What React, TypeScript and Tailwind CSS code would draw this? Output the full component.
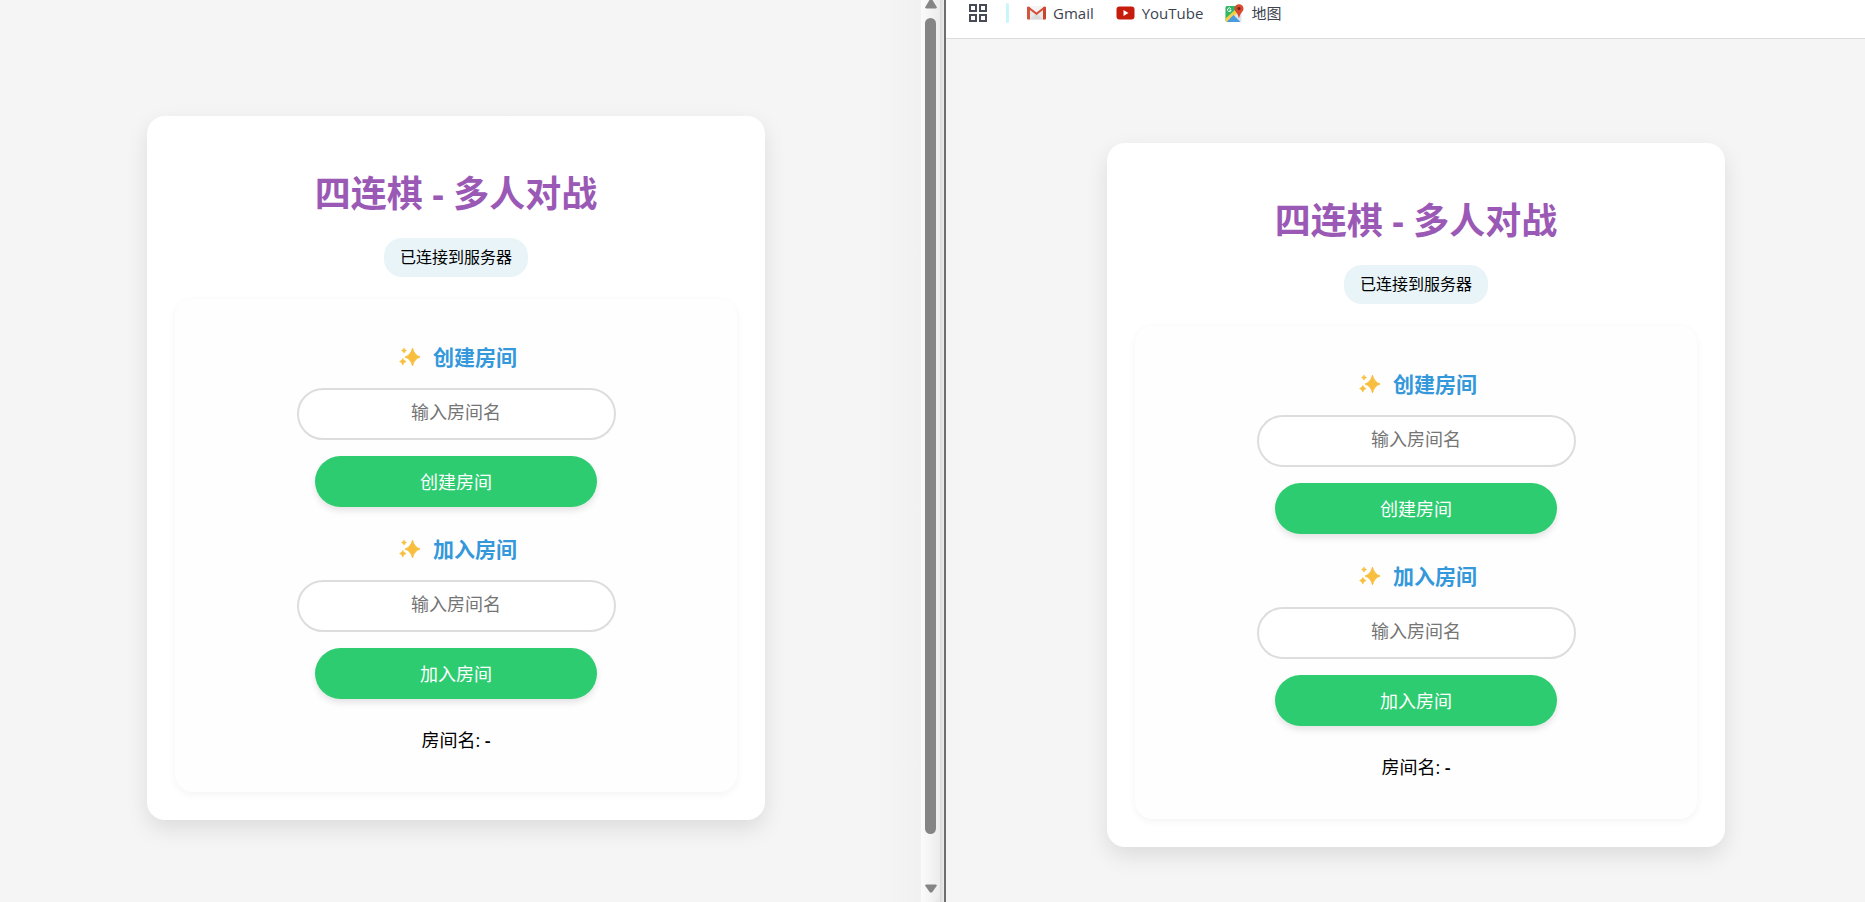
import React, { useState } from 'react';

const GridIcon: React.FC = () => (
  <svg width="18" height="18" viewBox="0 0 18 18" fill="none" stroke="#474b55" strokeWidth="2">
    <rect x="1" y="1" width="6" height="6" />
    <rect x="11" y="1" width="6" height="6" />
    <rect x="1" y="11" width="6" height="6" />
    <rect x="11" y="11" width="6" height="6" />
  </svg>
);

const GmailIcon: React.FC = () => (
  <svg width="19" height="14" viewBox="0 0 19 14">
    <rect x="1" y="0.5" width="17" height="13" rx="1" fill="#e8e8e8" />
    <path d="M3 13.5 9.5 7l6.5 6.5z" fill="#dadada" />
    <path d="M3 1h13L9.500 6z" fill="#f4f4f4" />
    <path d="M0 1.800Q0 .5 1.400.5L3 1.500V13.500H1Q0 13.500 0 12.500z" fill="#d2553f" />
    <path d="M19 1.800Q19 .5 17.600.5L16 1.500V13.500H18Q19 13.500 19 12.500z" fill="#c8442f" />
    <path d="M1.300 1.500 9.500 7.800 17.700 1.500" fill="none" stroke="#d54c38" strokeWidth="2" />
  </svg>
);

const YouTubeIcon: React.FC = () => (
  <svg width="19" height="14" viewBox="0 0 19 14">
    <rect x="0.500" y="0.500" width="18" height="13" rx="3" fill="#c51c0c" />
    <path d="M7.500 4v6l5-3z" fill="#fff" />
  </svg>
);

const MapsIcon: React.FC = () => (
  <svg width="19" height="19" viewBox="0 0 19 19">
    <rect x="0.500" y="2" width="16" height="16" rx="2" fill="#dfe3e6" />
    <path d="M2 2h10v4.500L1 17 .5 16V3.500Q.5 2 2 2z" fill="#2fb765" />
    <path d="M.5 14.500 11 5l2.500 2.500L3 18H2Q.5 18 .5 16.500z" fill="#f6cf45" />
    <path d="M1.500 18 8.500 11l7 7z" fill="#4a9be0" />
    <path d="M5.800 4.700A1.800 1.800 0 1 0 6.100 6H4.500" fill="none" stroke="#fff" strokeWidth="1" />
    <path d="M14 0.300a4.500 4.500 0 0 1 4.500 4.500c0 3-3.500 4-4.200 9h-.6c-.7-5-4.200-6-4.200-9A4.500 4.500 0 0 1 14 .3z" fill="#d8492f" />
    <circle cx="14" cy="4.500" r="1.500" fill="#7d1f14" />
  </svg>
);

const SparklesIcon: React.FC = () => (
  <svg width="22" height="20" viewBox="0 0 22 20" fill="#f8bf3f" stroke="#f8bf3f" strokeLinejoin="round">
    <path strokeWidth="1" d="M13.500 1.200Q15 8 21 10Q15 12 13.500 18.800Q12 12 6 10Q12 8 13.500 1.200z" />
    <path strokeWidth="0.500" d="M5 .9Q5.600 3 7.600 3.500Q5.600 4.100 5 6.200Q4.400 4.100 2.400 3.500Q4.400 3 5 .9z" />
    <path strokeWidth="0.500" d="M3.800 11.300Q4.600 13.900 7.100 14.600Q4.600 15.400 3.800 18.200Q3 15.400.5 14.600Q3 13.900 3.800 11.300z" />
  </svg>
);

interface RoomFormProps {
  id: string;
  title: string;
}

const RoomForm: React.FC<RoomFormProps> = ({ id, title }) => {
  const [name, setName] = useState('');

  return (
    <form className="flex w-full flex-col items-center gap-4" onSubmit={(e) => e.preventDefault()}>
      <label htmlFor={id} className="flex items-center gap-3 pb-0.5 pl-1 text-[21px] leading-[26px] font-bold text-[#3498db]">
        <SparklesIcon />
        {title}
      </label>
      <input
        id={id}
        type="text"
        value={name}
        onChange={(e) => setName(e.target.value)}
        placeholder="输入房间名"
        className="h-[52px] w-full max-w-[319px] rounded-full border-2 border-[#ddd] bg-white px-4 pb-1 text-center text-lg placeholder:text-[#757575] focus:outline-none"
      />
      <button
        type="submit"
        className="h-[51px] w-full max-w-[282px] rounded-full bg-[#2ecc71] text-lg text-white shadow-[0_4px_6px_rgba(0,0,0,0.1)]"
      >
        {title}
      </button>
    </form>
  );
};

interface LobbyProps {
  side: string;
}

const Lobby: React.FC<LobbyProps> = ({ side }) => (
  <main className="flex w-full max-w-[618px] flex-col items-center rounded-[18px] bg-white px-7 pt-[53px] pb-7 shadow-[0_9px_22px_rgba(0,0,0,0.1)]">
    <h1 className="text-4xl leading-[50px] font-bold text-[#9b59b6]">四连棋 - 多人对战</h1>
    <p className="mt-[19px] rounded-[18px] bg-[#e8f4f8] px-4 text-base leading-[39px]">已连接到服务器</p>

    <section className="mt-[22px] flex w-full flex-col items-center rounded-[18px] bg-[#fefefe] px-4 pt-[45px] pb-[38px] shadow-[0_2px_9px_rgba(0,0,0,0.05)]">
      <div className="flex w-full flex-col gap-[29px]">
        <RoomForm id={`${side}-create`} title="创建房间" />
        <RoomForm id={`${side}-join`} title="加入房间" />
      </div>
      <p className="mt-[27px] text-lg leading-7">
        房间名: <span className="font-semibold">-</span>
      </p>
    </section>
  </main>
);

const Scrollbar: React.FC = () => (
  <div className="flex w-[19px] shrink-0 flex-col items-center rounded-br-lg bg-gradient-to-r from-[#fbfbfb] to-[#ececec]">
    <svg width="12" height="9" viewBox="0 0 12 9" className="shrink-0">
      <path d="M4.500 0h3L12 7.500 11 8.500H1L0 7.500z" fill="#858585" />
    </svg>
    <div className="mt-[9px] mb-[50px] w-[11px] flex-1 rounded-full bg-[#858585]"></div>
    <svg width="12" height="9" viewBox="0 0 12 9" className="mb-[9px] shrink-0">
      <path d="M1 .5h10l1 1L7 8.500H5L0 1.500z" fill="#858585" />
    </svg>
  </div>
);

const BOOKMARKS = [
  { label: 'Gmail', icon: <GmailIcon /> },
  { label: 'YouTube', icon: <YouTubeIcon /> },
  { label: '地图', icon: <MapsIcon /> },
];

const BookmarkBar: React.FC = () => (
  <nav className="flex h-[39px] items-start border-b border-[#dcdcdc] bg-white pl-[23px] text-[15px] text-[#3c4450]">
    <button aria-label="Apps" className="flex h-[26px] items-center">
      <GridIcon />
    </button>
    <div className="mt-[3px] mr-[18px] ml-[19px] h-5 w-[3px] rounded-full bg-[#c9f6fb]"></div>
    <div className="flex gap-[22px]">
      {BOOKMARKS.map((b) => (
        <a key={b.label} href="#" className="flex h-[26px] items-center gap-[7px]">
          {b.icon}
          {b.label}
        </a>
      ))}
    </div>
  </nav>
);

export default function App() {
  return (
    <div className="grid h-screen grid-cols-[946fr_919fr] overflow-hidden bg-[#f5f5f5] font-['Open_Sans','Noto_Sans_CJK_SC',sans-serif] text-black">
      {/* Left window */}
      <div className="flex min-h-0 border-r-2 border-[#6e6e6e] bg-[#e8e8e8]">
        <div className="flex flex-1 items-start justify-center bg-[#f5f5f5] bg-gradient-to-r from-[#f5f5f5] from-95% to-[#f1f1f1] pt-[116px] pr-[9px]">
          <Lobby side="left" />
        </div>
        <Scrollbar />
        <div className="w-1 shrink-0 bg-gradient-to-r from-[#d8d8d8] to-[#ececec]"></div>
      </div>

      {/* Right window */}
      <div className="flex min-h-0 flex-col">
        <BookmarkBar />
        <div className="flex flex-1 items-start justify-center pt-[104px] pl-[21px]">
          <Lobby side="right" />
        </div>
      </div>
    </div>
  );
}
